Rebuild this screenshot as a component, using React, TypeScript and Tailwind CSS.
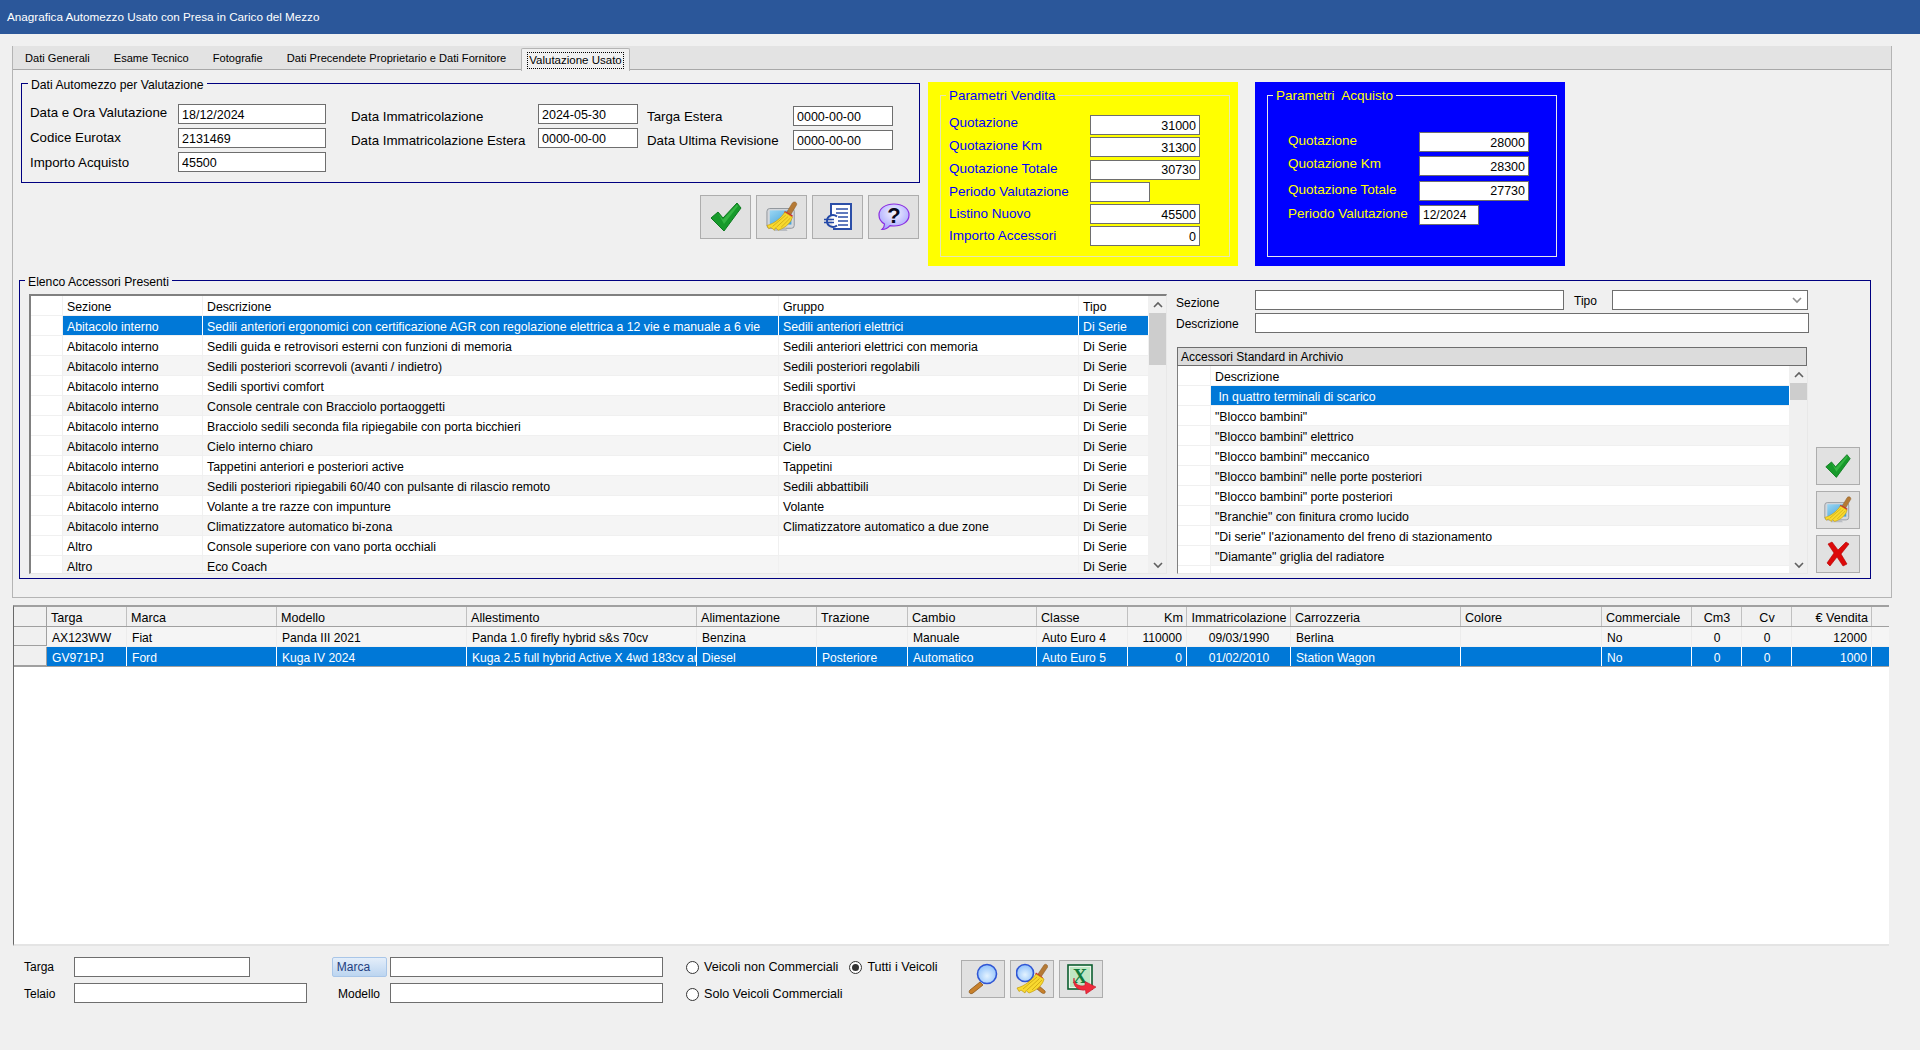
import type { ReactNode } from "react";

type Align = "left" | "right" | "center";

const ALIGN_CLASS: Record<Align, string> = {
  left: "text-left",
  right: "text-right",
  center: "text-center",
};

const ACCESSORI = [
  ["Abitacolo interno", "Sedili anteriori ergonomici con certificazione AGR con regolazione elettrica a 12 vie e manuale a 6 vie", "Sedili anteriori elettrici"],
  ["Abitacolo interno", "Sedili guida e retrovisori esterni con funzioni di memoria", "Sedili anteriori elettrici con memoria"],
  ["Abitacolo interno", "Sedili posteriori scorrevoli (avanti / indietro)", "Sedili posteriori regolabili"],
  ["Abitacolo interno", "Sedili sportivi comfort", "Sedili sportivi"],
  ["Abitacolo interno", "Console centrale con Bracciolo portaoggetti", "Bracciolo anteriore"],
  ["Abitacolo interno", "Bracciolo sedili seconda fila ripiegabile con porta bicchieri", "Bracciolo posteriore"],
  ["Abitacolo interno", "Cielo interno chiaro", "Cielo"],
  ["Abitacolo interno", "Tappetini anteriori e posteriori active", "Tappetini"],
  ["Abitacolo interno", "Sedili posteriori ripiegabili 60/40 con pulsante di rilascio remoto", "Sedili abbattibili"],
  ["Abitacolo interno", "Volante a tre razze con impunture", "Volante"],
  ["Abitacolo interno", "Climatizzatore automatico bi-zona", "Climatizzatore automatico a due zone"],
  ["Altro", "Console superiore con vano porta occhiali", ""],
  ["Altro", "Eco Coach", ""],
];

const ARCHIVIO = [
  "\u00a0In quattro terminali di scarico",
  '"Blocco bambini"',
  '"Blocco bambini" elettrico',
  '"Blocco bambini" meccanico',
  '"Blocco bambini" nelle porte posteriori',
  '"Blocco bambini" porte posteriori',
  '"Branchie" con finitura cromo lucido',
  '"Di serie" l\'azionamento del freno di stazionamento',
  '"Diamante" griglia del radiatore',
  "",
];

const VEICOLI_COLS: { label: string; width: string; align?: Align; headAlign?: Align }[] = [
  { label: "Targa", width: "w-[80px]" },
  { label: "Marca", width: "w-[150px]" },
  { label: "Modello", width: "w-[190px]" },
  { label: "Allestimento", width: "w-[230px]" },
  { label: "Alimentazione", width: "w-[120px]" },
  { label: "Trazione", width: "w-[91px]" },
  { label: "Cambio", width: "w-[129px]" },
  { label: "Classe", width: "w-[91px]" },
  { label: "Km", width: "w-[59px]", align: "right", headAlign: "right" },
  { label: "Immatricolazione", width: "w-[104px]", align: "center", headAlign: "center" },
  { label: "Carrozzeria", width: "w-[170px]" },
  { label: "Colore", width: "w-[141px]" },
  { label: "Commerciale", width: "w-[90px]" },
  { label: "Cm3", width: "w-[50px]", align: "center", headAlign: "center" },
  { label: "Cv", width: "w-[50px]", align: "center", headAlign: "center" },
  { label: "€ Vendita", width: "w-[80px]", align: "right", headAlign: "right" },
];

const VEICOLI = [
  ["AX123WW", "Fiat", "Panda III 2021", "Panda 1.0 firefly hybrid s&s 70cv", "Benzina", "", "Manuale", "Auto Euro 4", "110000", "09/03/1990", "Berlina", "", "No", "0", "0", "12000"],
  ["GV971PJ", "Ford", "Kuga IV 2024", "Kuga 2.5 full hybrid Active X 4wd 183cv automatico", "Diesel", "Posteriore", "Automatico", "Auto Euro 5", "0", "01/02/2010", "Station Wagon", "", "No", "0", "0", "1000"],
];

// le etichette dei parametri non sono in asse con le caselle: lo scarto e' per riga
const PARAMETRI_VENDITA = [
  { label: "Quotazione", value: "31000", shift: "-translate-y-[2px]" },
  { label: "Quotazione Km", value: "31300", shift: "-translate-y-[1px]" },
  { label: "Quotazione Totale", value: "30730", shift: "-translate-y-[1px]" },
  { label: "Periodo Valutazione", value: "", shift: "" },
  { label: "Listino Nuovo", value: "45500", shift: "" },
  { label: "Importo Accessori", value: "0", shift: "" },
];

const PARAMETRI_ACQUISTO = [
  { label: "Quotazione", value: "28000", shift: "-translate-y-[1px]" },
  { label: "Quotazione Km", value: "28300", shift: "-translate-y-[2px]" },
  { label: "Quotazione Totale", value: "27730", shift: "-translate-y-[1px]" },
  { label: "Periodo Valutazione", value: "12/2024", shift: "-translate-y-[1px]" },
];

function CheckIcon({ size = 32 }: { size?: number }) {
  return (
    <svg width={size} height={size} viewBox="0 0 32 30">
      <path d="M1 16 L8 10 L13 16 L27 1 L31 6 L14 29 Z" fill="#179a2b" stroke="#0c7a1f" strokeWidth="1" strokeLinejoin="round" />
      <path d="M8 11 L13 17.5 L27 2.5 L28 4 L14 22 Z" fill="#35b544" />
    </svg>
  );
}

function CrossIcon() {
  return (
    <svg width="24" height="26" viewBox="0 0 24 26">
      <path d="M2 3 L6 1 L12 9 L20 1 L23 3 L15 13 L21 23 L17 25 L11 16 L4 25 L1 22 L8 12 Z" fill="#dd0a0a" stroke="#b00000" strokeWidth="0.6" strokeLinejoin="round" />
    </svg>
  );
}

function Bristles() {
  return (
    <g>
      <path d="M20 12 L28 17 C27 22 22 28 13 31 L10 28.5 L9 31 L5 28 L3 29.5 L1 26 C9 24 16 18 20 12 Z" fill="#f8d92f" stroke="#c39b0c" strokeWidth="0.7" strokeLinejoin="round" />
      <path d="M21 15 L7 27 M23.5 16.5 L11 28 M26 18 L16 28" stroke="#c39b0c" strokeWidth="0.7" fill="none" />
    </g>
  );
}

function BroomIcon({ size = 32 }: { size?: number }) {
  return (
    <svg width={size} height={size} viewBox="0 0 34 34">
      <defs>
        <linearGradient id="schermo" x1="0" y1="0" x2="1" y2="1">
          <stop offset="0" stopColor="#9ad6f4" />
          <stop offset="1" stopColor="#3f9fd6" />
        </linearGradient>
      </defs>
      <rect x="1" y="8" width="29" height="21" rx="3" fill="#d4d7dc" stroke="#8d9299" strokeWidth="1" />
      <rect x="4" y="10" width="23" height="15" fill="url(#schermo)" />
      <path d="M10 29 L21 29 L23 32 L8 32 Z" fill="#b9bdc3" />
      <path d="M31 1 C33 2 33 4 32 5 L26 15 L22 12 L28 2 C29 1 30 1 31 1 Z" fill="#b57a35" stroke="#85551f" strokeWidth="0.5" />
      <path d="M20 10.5 L28.5 15.5 L27.5 18 L19 12.8 Z" fill="#d2202c" />
      <Bristles />
    </svg>
  );
}

function EuroDocIcon() {
  return (
    <svg width="32" height="32" viewBox="0 0 32 32">
      <path d="M9 14 L9 3 L29 3 L29 28 L11 28" fill="#ffffff" stroke="#2c4fa8" strokeWidth="2" />
      <path d="M14 8 H26 M14 12 H26 M16 16 H26 M16 20 H26 M16 24 H26" stroke="#2c4fa8" strokeWidth="1.6" />
      <path d="M15 15.5 C11 12.5 5 14.5 5 20 C5 25.5 11 27.5 15 24.5" fill="none" stroke="#2449a8" strokeWidth="2" />
      <path d="M2 18.5 H12 M2 21.5 H12" stroke="#2449a8" strokeWidth="1.6" />
    </svg>
  );
}

function HelpIcon() {
  return (
    <svg width="32" height="32" viewBox="0 0 32 32">
      <defs>
        <radialGradient id="bolla" cx="0.5" cy="0.35" r="0.65">
          <stop offset="0" stopColor="#f4f4ff" />
          <stop offset="1" stopColor="#a6a4ff" />
        </radialGradient>
      </defs>
      <path d="M16 3 C24 3 31 7 31 14 C31 21 24 25 16 25 C14 25 13 25 12 24.6 C10 27 7 28.5 4 28.5 C5.5 27 6.5 25 6.5 23 C3 21 1 18 1 14 C1 7 8 3 16 3 Z" fill="url(#bolla)" stroke="#8a2be2" strokeWidth="1.2" />
      <text x="16" y="21.5" textAnchor="middle" fontSize="22" fontWeight="700" fontFamily="Liberation Sans, sans-serif" fill="#0a0a20">?</text>
    </svg>
  );
}

function Lens({ cx, cy, r }: { cx: number; cy: number; r: number }) {
  return (
    <g>
      <defs>
        <radialGradient id="lente" cx="0.5" cy="0.6" r="0.6">
          <stop offset="0" stopColor="#e4f3ff" />
          <stop offset="1" stopColor="#8ec0fb" />
        </radialGradient>
      </defs>
      <circle cx={cx} cy={cy} r={r} fill="url(#lente)" stroke="#2f55d4" strokeWidth="1.6" />
    </g>
  );
}

function SearchIcon() {
  return (
    <svg width="32" height="32" viewBox="0 0 32 32">
      <path d="M13 19 L3 27 C1 29 3 32 6 30 L16 22 Z" fill="#c8812c" stroke="#8a5518" strokeWidth="0.8" />
      <Lens cx={20} cy={11} r={9.5} />
    </svg>
  );
}

function SearchBroomIcon() {
  return (
    <svg width="32" height="32" viewBox="0 0 32 32">
      <path d="M14 15 L29 28 C30 30 28 31 26 30 L11 18 Z" fill="#c8812c" stroke="#8a5518" strokeWidth="0.7" />
      <Lens cx={9} cy={10} r={8.5} />
      <path d="M31 2 C32 3 32 4 31 5 L25 14 L22 11 L28 2 C29 1 30 1 31 2 Z" fill="#b57a35" stroke="#85551f" strokeWidth="0.5" />
      <path d="M20 9.5 L27 14.5 L26 16.5 L19 11.5 Z" fill="#d2202c" />
      <g transform="translate(0 -1)">
        <Bristles />
      </g>
    </svg>
  );
}

function ExcelIcon() {
  return (
    <svg width="32" height="32" viewBox="0 0 32 32">
      <rect x="3" y="2" width="24" height="24" fill="#eaf6ea" stroke="#0d5e30" strokeWidth="1.6" />
      <rect x="5" y="4" width="20" height="20" fill="#bfe6c3" />
      <text x="15" y="20" textAnchor="middle" fontSize="20" fontWeight="700" fontFamily="Liberation Serif, serif" fill="#0f7a3c">X</text>
      <path d="M9 15 C9 21 14 24 20 22.5 L20 18.5 L31 24 L21 31 L20.5 27 C13 28 7 23 9 15 Z" fill="#ef2b3c" stroke="#c4182a" strokeWidth="0.6" />
    </svg>
  );
}

function Chevron({ up, className }: { up?: boolean; className?: string }) {
  return (
    <svg width="10" height="8" viewBox="0 0 10 8" className={className}>
      <path d={up ? "M1 6 L5 2 L9 6" : "M1 2 L5 6 L9 2"} fill="none" stroke="#606060" strokeWidth="1.6" />
    </svg>
  );
}

function TextBox({ value = "", className = "", right }: { value?: string; className?: string; right?: boolean }) {
  return (
    <input
      readOnly
      value={value}
      className={`h-[20px] border border-[#6e6e6e] bg-white px-[3px] pt-[1px] text-[12.5px] leading-none text-black outline-none ${right ? "text-right" : ""} ${className}`}
    />
  );
}

function IconButton({ children, className = "" }: { children: ReactNode; className?: string }) {
  return (
    <button type="button" className={`flex shrink-0 items-center justify-center border border-[#adadad] bg-[#e1e1e1] ${className}`}>
      {children}
    </button>
  );
}

function GroupBox({ title, children, className = "", titleClass = "" }: { title: string; children: ReactNode; className?: string; titleClass?: string }) {
  return (
    <div className={`relative ${className}`}>
      <span className={`absolute whitespace-nowrap px-[3px] leading-[16px] ${titleClass}`}>
        {title}
      </span>
      {children}
    </div>
  );
}

function ScrollBar({ thumb }: { thumb: string }) {
  return (
    <div className="flex w-[17px] shrink-0 flex-col bg-[#f0f0f0]">
      <div className="flex h-[17px] shrink-0 items-center justify-center">
        <Chevron up />
      </div>
      <div className={`bg-[#cdcdcd] ${thumb}`} />
      <div className="flex-1" />
      <div className="flex h-[17px] shrink-0 items-center justify-center">
        <Chevron />
      </div>
    </div>
  );
}

function Cell({ children, className = "", selected }: { children?: ReactNode; className?: string; selected?: boolean }) {
  return (
    <div
      className={`h-full shrink-0 overflow-hidden whitespace-nowrap border-r px-[4px] text-[12.3px] leading-[23px] ${
        selected ? "border-r-white bg-[#0078d7] text-white" : "border-r-[#f0f0f0]"
      } ${className}`}
    >
      {children}
    </div>
  );
}

function AccessoriGrid() {
  return (
    <div className="ml-[9px] mt-[13px] flex h-[280px] w-[1138px] shrink-0 border-l-2 border-t-2 border-r border-b border-l-[#808080] border-t-[#808080] border-r-[#e8e8e8] border-b-[#e8e8e8] bg-white">
      <div className="w-[1118px] overflow-hidden">
        <div className="flex h-[20px] border-b border-b-[#f0f0f0]">
          <Cell className="w-[32px]" />
          <Cell className="w-[140px]">Sezione</Cell>
          <Cell className="w-[576px]">Descrizione</Cell>
          <Cell className="w-[300px]">Gruppo</Cell>
          <Cell className="w-[70px]">Tipo</Cell>
        </div>
        {ACCESSORI.map((row, i) => {
          const selected = i === 0;
          return (
            <div key={row[1]} className={`flex h-[20px] border-b border-b-[#f0f0f0] ${i % 2 === 0 && !selected ? "bg-[#f5f5f5]" : ""}`}>
              <Cell className="w-[32px] bg-white" />
              <Cell className="w-[140px]" selected={selected}>{row[0]}</Cell>
              <Cell className="w-[576px]" selected={selected}>{row[1]}</Cell>
              <Cell className="w-[300px]" selected={selected}>{row[2]}</Cell>
              <Cell className="w-[70px]" selected={selected}>Di Serie</Cell>
            </div>
          );
        })}
      </div>
      <ScrollBar thumb="h-[52px]" />
    </div>
  );
}

function ArchivioGrid() {
  return (
    <div className="ml-[1px] flex h-[208px] w-[631px] border-l border-r border-b border-l-[#808080] border-r-[#e8e8e8] border-b-[#e8e8e8] bg-white">
      <div className="w-[612px] overflow-hidden">
        <div className="flex h-[20px] border-b border-b-[#f0f0f0]">
          <Cell className="w-[33px]" />
          <Cell className="w-[579px]">Descrizione</Cell>
        </div>
        {ARCHIVIO.map((text, i) => {
          const selected = i === 0;
          return (
            <div key={i} className={`flex h-[20px] border-b border-b-[#f0f0f0] ${i % 2 === 0 && !selected ? "bg-[#f5f5f5]" : ""}`}>
              <Cell className="w-[33px] bg-white" />
              <Cell className="w-[579px]" selected={selected}>{text}</Cell>
            </div>
          );
        })}
      </div>
      <ScrollBar thumb="h-[17px]" />
    </div>
  );
}

function VeicoliGrid() {
  return (
    <div className="ml-[13px] mt-[7px] h-[341px] w-[1876px] shrink-0 border-l border-t-2 border-b-2 border-l-[#696969] border-t-[#a0a0a0] border-b-[#e4e4e4] bg-white">
      <div className="flex h-[20px] border-b border-b-[#a0a0a0] bg-[#f0f0f0]">
        <div className="h-full w-[33px] shrink-0 border-r border-r-[#a0a0a0]" />
        {VEICOLI_COLS.map((col) => (
          <div
            key={col.label}
            className={`h-full shrink-0 overflow-hidden whitespace-nowrap border-r border-r-[#c0c0c0] pl-[4px] pr-[3px] text-[12.6px] leading-[22px] ${col.width} ${ALIGN_CLASS[col.headAlign ?? "left"]}`}
          >
            {col.label}
          </div>
        ))}
      </div>
      {VEICOLI.map((row, r) => {
        const selected = r === 1;
        return (
          <div key={row[0]} className={`flex h-[20px] border-b ${selected ? "border-b-[#a0a0a0] bg-[#0078d7] text-white" : "border-b-[#f0f0f0] bg-[#f5f5f5]"}`}>
            <div className="h-full w-[33px] shrink-0 border-b border-r border-b-[#a0a0a0] border-r-[#a0a0a0] bg-[#f0f0f0]" />
            {row.map((value, c) => (
              <div
                key={VEICOLI_COLS[c].label}
                className={`h-full shrink-0 overflow-hidden whitespace-nowrap border-r pl-[5px] pr-[4px] text-[12.1px] leading-[22px] ${selected ? "border-r-white" : "border-r-[#ececec]"} ${VEICOLI_COLS[c].width} ${ALIGN_CLASS[VEICOLI_COLS[c].align ?? "left"]}`}
              >
                {value}
              </div>
            ))}
          </div>
        );
      })}
    </div>
  );
}

function Radio({ label, checked, className = "" }: { label: string; checked?: boolean; className?: string }) {
  return (
    <div className={`flex items-center ${className}`}>
      <span className="flex h-[13px] w-[13px] shrink-0 items-center justify-center rounded-full border border-[#333333] bg-white">
        {checked && <span className="h-[7px] w-[7px] rounded-full bg-[#333333]" />}
      </span>
      <span className="ml-[5px] whitespace-nowrap text-[12.6px]">{label}</span>
    </div>
  );
}

function ParamRow({ label, value, short, labelClass, shift }: { label: string; value: string; short?: boolean; labelClass: string; shift: string }) {
  return (
    <div className="flex items-center">
      <span className={`shrink-0 text-[13.5px] ${labelClass} ${shift}`}>{label}</span>
      <TextBox value={value} right={!short} className={short ? "w-[60px] text-[12px]" : "w-[110px]"} />
    </div>
  );
}

export default function App() {
  return (
    <div className="flex h-[1050px] w-[1920px] flex-col overflow-hidden bg-[#f0f0f0] font-['Liberation_Sans',Arial,sans-serif] text-[12px] text-black">
      <div className="flex h-[34px] shrink-0 items-center bg-[#2b579a] px-[7px] text-[11.7px] text-white">
        Anagrafica Automezzo Usato con Presa in Carico del Mezzo
      </div>

      {/* Schede */}
      <div className="ml-[12px] mt-[12px] h-[552px] w-[1880px] shrink-0 border-x border-b border-[#b4b4b4]">
        <div className="flex h-[24px] border-b border-b-[#a8a8a8] bg-[#e3e3e3] text-[11.1px]">
          <div className="flex h-full items-center px-[12px] pt-[2px]">Dati Generali</div>
          <div className="flex h-full items-center px-[12px] pt-[2px]">Esame Tecnico</div>
          <div className="flex h-full items-center px-[12px] pt-[2px]">Fotografie</div>
          <div className="flex h-full items-center px-[12px] pt-[2px]">Dati Precendete Proprietario e Dati Fornitore</div>
          <div className="ml-[3px] mt-[2px] flex h-[23px] items-center rounded-t-[2px] border-x border-t border-[#b4b4b4] bg-[#f0f0f0] px-[5px] text-[11.5px]">
            <span className="border border-dotted border-black px-[1px] leading-[15px]">Valutazione Usato</span>
          </div>
        </div>

        <div className="mt-[12px] flex items-start pl-[8px]">
          <div className="mt-[1px] w-[899px] shrink-0">
            <GroupBox title="Dati Automezzo per Valutazione" titleClass="left-[6px] top-[-7px] bg-[#f0f0f0] text-[12.2px]" className="h-[100px] border border-[#000080]">
              <div className="flex pt-[20px] text-[13.3px]">
                <div className="ml-[8px] flex w-[304px] shrink-0 flex-col gap-[4px]">
                  <div className="flex items-center"><span className="w-[148px] shrink-0 -translate-y-[1px]">Data e Ora Valutazione</span><TextBox value="18/12/2024" className="w-[148px]" /></div>
                  <div className="flex items-center"><span className="w-[148px] shrink-0">Codice Eurotax</span><TextBox value="2131469" className="w-[148px]" /></div>
                  <div className="flex items-center"><span className="w-[148px] shrink-0 translate-y-[1px]">Importo Acquisto</span><TextBox value="45500" className="w-[148px]" /></div>
                </div>
                <div className="ml-[17px] flex w-[287px] shrink-0 flex-col gap-[4px]">
                  <div className="flex items-center"><span className="w-[187px] shrink-0 translate-y-[3px]">Data Immatricolazione</span><TextBox value="2024-05-30" className="w-[100px]" /></div>
                  <div className="flex items-center"><span className="w-[187px] shrink-0 translate-y-[3px]">Data Immatricolazione Estera</span><TextBox value="0000-00-00" className="w-[100px]" /></div>
                </div>
                <div className="ml-[9px] mt-[2px] flex shrink-0 flex-col gap-[4px]">
                  <div className="flex items-center"><span className="w-[146px] shrink-0 translate-y-[1px]">Targa Estera</span><TextBox value="0000-00-00" className="w-[100px]" /></div>
                  <div className="flex items-center"><span className="w-[146px] shrink-0 translate-y-[1px]">Data Ultima Revisione</span><TextBox value="0000-00-00" className="w-[100px]" /></div>
                </div>
              </div>
            </GroupBox>
            <div className="mt-[12px] flex justify-end gap-[5px] pr-[1px]">
              <IconButton className="h-[44px] w-[51px]"><CheckIcon /></IconButton>
              <IconButton className="h-[44px] w-[51px]"><BroomIcon /></IconButton>
              <IconButton className="h-[44px] w-[51px]"><EuroDocIcon /></IconButton>
              <IconButton className="h-[44px] w-[51px]"><HelpIcon /></IconButton>
            </div>
          </div>

          <div className="ml-[8px] h-[184px] w-[310px] shrink-0 bg-[#ffff00] pl-[12px] pr-[8px] pt-[13px]">
            <GroupBox title="Parametri Vendita" titleClass="left-[5px] top-[-8px] bg-[#ffff00] text-[13.4px] text-[#0000ff]" className="h-[162px] border border-[#e6e6b4]">
              <div className="flex flex-col gap-[2px] pl-[8px] pt-[19px]">
                {PARAMETRI_VENDITA.map((p, i) => (
                  <ParamRow key={p.label} label={p.label} value={p.value} shift={p.shift} short={i === 3} labelClass="w-[141px] text-[#0000ff]" />
                ))}
              </div>
            </GroupBox>
          </div>

          <div className="ml-[17px] h-[184px] w-[310px] shrink-0 bg-[#0000ff] pl-[12px] pr-[8px] pt-[13px]">
            <GroupBox title="Parametri  Acquisto" titleClass="left-[5px] top-[-8px] whitespace-pre bg-[#0000ff] text-[13.5px] text-[#ffff00]" className="h-[162px] border border-[#e8e8e8]">
              <div className="flex flex-col gap-[4px] pl-[20px] pt-[36px]">
                {PARAMETRI_ACQUISTO.map((p, i) => (
                  <ParamRow key={p.label} label={p.label} value={p.value} shift={p.shift} short={i === 3} labelClass="w-[131px] text-[#ffff00]" />
                ))}
              </div>
            </GroupBox>
          </div>
        </div>

        <GroupBox
          title="Elenco Accessori Presenti"
          titleClass="left-[5px] top-[-7px] bg-[#f0f0f0] text-[12.2px]"
          className="ml-[6px] mt-[14px] flex h-[299px] w-[1852px] items-start border border-[#000080]"
        >
          <AccessoriGrid />
          <div className="ml-[9px] mt-[9px] flex w-[633px] shrink-0 flex-col">
            <div className="flex items-center">
              <span className="w-[79px] shrink-0 translate-y-[3px]">Sezione</span>
              <TextBox className="w-[309px]" />
              <span className="ml-[10px] w-[38px] shrink-0 translate-y-[1px]">Tipo</span>
              <div className="flex h-[20px] w-[196px] items-center justify-end border border-[#6e6e6e] bg-white pr-[5px]">
                <Chevron className="opacity-70" />
              </div>
            </div>
            <div className="mt-[3px] flex items-center">
              <span className="w-[79px] shrink-0 translate-y-[1px]">Descrizione</span>
              <TextBox className="w-[554px]" />
            </div>
            <div className="ml-[1px] mt-[14px] flex h-[19px] w-[630px] items-center border border-[#6e6e6e] bg-[#dcdcdc] pl-[3px]">
              Accessori Standard in Archivio
            </div>
            <ArchivioGrid />
          </div>
          <div className="ml-[7px] mt-[166px] flex flex-col gap-[6px]">
            <IconButton className="h-[38px] w-[44px]"><CheckIcon size={26} /></IconButton>
            <IconButton className="h-[38px] w-[44px]"><BroomIcon size={28} /></IconButton>
            <IconButton className="h-[38px] w-[44px]"><CrossIcon /></IconButton>
          </div>
        </GroupBox>
      </div>

      <VeicoliGrid />

      {/* Filtri */}
      <div className="mt-[11px] flex items-start pl-[24px]">
        <div className="flex w-[283px] shrink-0 flex-col gap-[6px]">
          <div className="flex items-center">
            <span className="w-[50px] shrink-0">Targa</span>
            <TextBox className="w-[176px]" />
          </div>
          <div className="flex items-center">
            <span className="w-[50px] shrink-0 translate-y-[1px]">Telaio</span>
            <TextBox className="w-[233px]" />
          </div>
        </div>
        <div className="ml-[25px] flex w-[332px] shrink-0 flex-col gap-[6px]">
          <div className="flex items-center">
            <button type="button" className="h-[20px] w-[55px] rounded-[2px] border border-[#a9c6e8] bg-gradient-to-b from-[#e4eefa] to-[#bcd5f0] pr-[12px] text-[#1f3f7f]">
              Marca
            </button>
            <TextBox className="ml-[3px] w-[273px]" />
          </div>
          <div className="flex items-center">
            <span className="ml-[6px] w-[52px] shrink-0 translate-y-[1px]">Modello</span>
            <TextBox className="w-[273px]" />
          </div>
        </div>
        <div className="ml-[22px] flex w-[270px] shrink-0 flex-col gap-[8px] pt-[1px]">
          <div className="flex">
            <Radio label="Veicoli non Commerciali" />
            <Radio label="Tutti i Veicoli" checked className="ml-[11px]" />
          </div>
          <Radio label="Solo Veicoli Commerciali" />
        </div>
        <div className="ml-[5px] mt-[3px] flex gap-[5px]">
          <IconButton className="h-[38px] w-[44px]"><SearchIcon /></IconButton>
          <IconButton className="h-[38px] w-[44px]"><SearchBroomIcon /></IconButton>
          <IconButton className="h-[38px] w-[44px]"><ExcelIcon /></IconButton>
        </div>
      </div>
    </div>
  );
}
